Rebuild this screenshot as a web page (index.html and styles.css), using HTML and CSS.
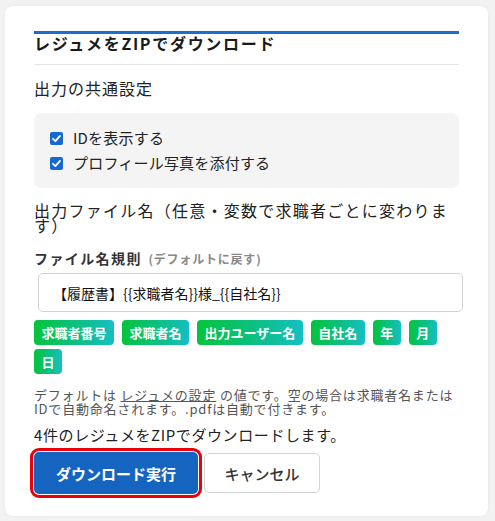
FILE: index.html
```html
<!DOCTYPE html>
<html lang="ja">
<head>
<meta charset="utf-8">
<link rel="stylesheet" href="styles.css">
</head>
<body>
<div class="card">
  <div class="bar"></div>
  <h2 class="title">レジュメをZIPでダウンロード</h2>
  <div class="divider"></div>
  <h3 class="section">出力の共通設定</h3>
  <div class="optbox">
    <label class="opt"><span class="cb"><svg viewBox="0 0 13 13" width="13" height="13"><rect x="0" y="0" width="13" height="13" rx="2" fill="#1769d0"/><path d="M3 6.8 L5.4 9.1 L10 3.9" fill="none" stroke="#fff" stroke-width="1.8" stroke-linecap="round" stroke-linejoin="round"/></svg></span>IDを表示する</label>
    <label class="opt"><span class="cb"><svg viewBox="0 0 13 13" width="13" height="13"><rect x="0" y="0" width="13" height="13" rx="2" fill="#1769d0"/><path d="M3 6.8 L5.4 9.1 L10 3.9" fill="none" stroke="#fff" stroke-width="1.8" stroke-linecap="round" stroke-linejoin="round"/></svg></span>プロフィール写真を添付する</label>
  </div>
  <h3 class="section wrap">出力ファイル名（任意・変数で求職者ごとに変わります）</h3>
  <div class="rule-label">ファイル名規則 <span class="reset">(デフォルトに戻す)</span></div>
  <div class="input">【履歴書】{{求職者名}}様_{{自社名}}</div>
  <div class="chips">
    <span class="chip">求職者番号</span>
    <span class="chip">求職者名</span>
    <span class="chip">出力ユーザー名</span>
    <span class="chip">自社名</span>
    <span class="chip">年</span>
    <span class="chip">月</span>
    <span class="chip">日</span>
  </div>
  <p class="help">デフォルトは <span class="link">レジュメの設定</span> の値です。空の場合は求職者名または<br>IDで自動命名されます。.pdfは自動で付きます。</p>
  <p class="count">4件のレジュメをZIPでダウンロードします。</p>
  <div class="actions">
    <button class="btn primary">ダウンロード実行</button>
    <button class="btn cancel">キャンセル</button>
  </div>
</div>
</body>
</html>
```
FILE: styles.css
```css
html, body { margin: 0; padding: 0; }
body {
  background: #f2f2f2;
  font-family: "Noto Sans CJK JP", "Noto Sans", sans-serif;
  color: #222;
  padding: 6px 7px 5px 5px;
  height: 521px;
  box-sizing: border-box;
}
.card {
  background: #fff;
  border-radius: 8px;
  padding: 25px 29px 0 29px;
  height: 510px;
  box-sizing: border-box;
  box-shadow: 0 0 3px rgba(0,0,0,0.06);
}
.bar { height: 3px; background: #1a6fce; }
.title {
  margin: 0;
  font-size: 16px;
  font-weight: 700;
  line-height: 18px;
  letter-spacing: 1.7px;
  color: #1a1a1a;
  padding-bottom: 12px;
}
.divider { height: 1px; background: #e6e6e6; }
.section {
  margin: 0;
  font-size: 16px;
  font-weight: 400;
  line-height: 20px;
  letter-spacing: 1px;
  color: #222;
  padding-top: 13px;
}
.optbox {
  margin-top: 15px;
  background: #f4f4f4;
  border-radius: 7px;
  padding: 15px 16px 15px 16px;
  display: flex;
  flex-direction: column;
  gap: 5px;
}
.opt {
  display: flex;
  align-items: center;
  font-size: 15px;
  line-height: 20px;
  letter-spacing: 0.2px;
  color: #222;
}
.cb { display: inline-flex; width: 13px; height: 13px; margin-right: 10px; }
.section.wrap { line-height: 15px; padding-top: 15px; letter-spacing: 1.25px; }
.rule-label {
  margin-top: 15px;
  font-size: 14px;
  font-weight: 700;
  line-height: 20px;
  letter-spacing: 1.4px;
  color: #333;
}
.reset { font-size: 12px; font-weight: 700; color: #888; margin-left: 2px; letter-spacing: 0.8px; }
.input {
  margin: 4px -4px 0 4px;
  height: 39px;
  box-sizing: border-box;
  border: 1px solid #cfd3d8;
  border-radius: 5px;
  padding: 0 14px;
  display: flex;
  align-items: center;
  font-size: 14px;
  color: #111;
}
.chips {
  margin-top: 8px;
  display: flex;
  flex-wrap: wrap;
  gap: 4px 8px;
}
.chip {
  height: 25px;
  box-sizing: border-box;
  padding: 0 7.5px;
  display: inline-flex;
  align-items: center;
  border-radius: 4px;
  background: linear-gradient(90deg, #03c43c 0%, #0dbf8a 60%, #16bfc4 100%);
  color: #fff;
  font-size: 13px;
  font-weight: 700;
}
.help {
  margin: 14px 0 0 0;
  font-size: 13px;
  line-height: 13.5px;
  letter-spacing: 0.8px;
  color: #555;
}
.link { text-decoration: underline; color: #555; }
.count {
  margin: 11px 0 0 0;
  font-size: 15px;
  line-height: 18px;
  letter-spacing: 0.6px;
  color: #222;
}
.actions {
  margin-top: 8px;
  display: flex;
  align-items: center;
  gap: 6px;
}
.btn {
  font-family: inherit;
  font-size: 15px;
  border-radius: 5px;
  cursor: pointer;
}
.primary {
  width: 164px;
  height: 42px;
  background: #1565c0;
  color: #fff;
  font-weight: 700;
  border: none;
  outline: 3px solid #e8000b;
  outline-offset: 1px;
  border-radius: 5px;
}
.cancel {
  width: 116px;
  height: 40px;
  background: #fff;
  color: #333;
  font-weight: 500;
  border: 1px solid #d2d5da;
}
```
